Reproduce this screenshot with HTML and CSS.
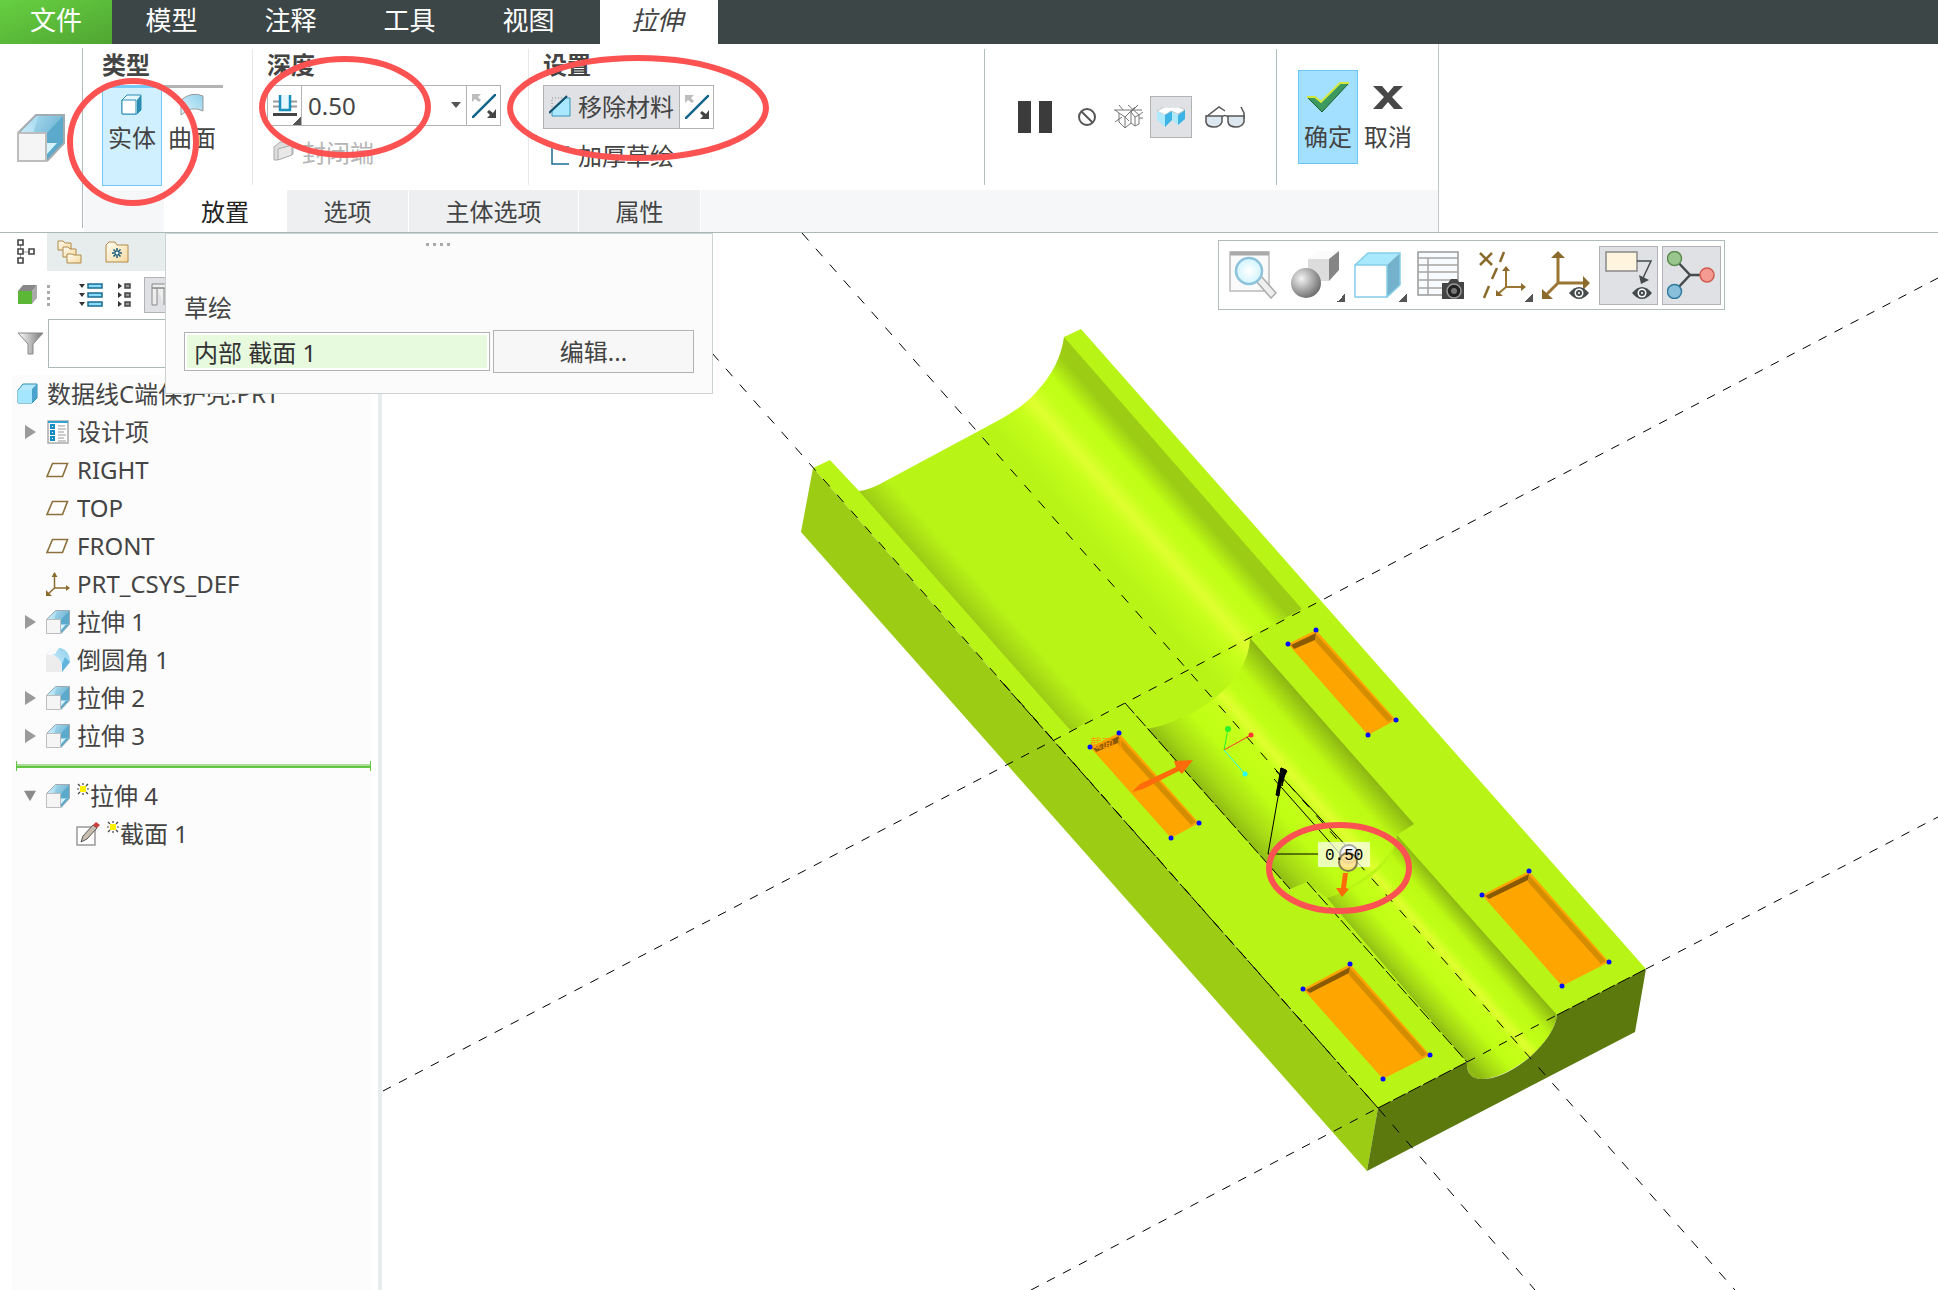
FILE: index.html
```html
<!DOCTYPE html>
<html lang="zh-CN">
<head>
<meta charset="utf-8">
<title>拉伸</title>
<link rel="stylesheet" href="styles.css">
</head>
<body>
<svg class="defs" aria-hidden="true">
  <defs>
    <linearGradient id="glassTop" x1="0" y1="1" x2="1" y2="0"><stop offset="0" stop-color="#e2f7ff"/><stop offset="1" stop-color="#8ecfea"/></linearGradient>
    <linearGradient id="glassSide" x1="0" y1="0" x2="1" y2="1"><stop offset="0" stop-color="#a5d8ee"/><stop offset="1" stop-color="#4f9fc2"/></linearGradient>
    <linearGradient id="steel" x1="0" y1="0" x2="1" y2="0"><stop offset="0" stop-color="#fff"/><stop offset="1" stop-color="#777"/></linearGradient>
    <radialGradient id="ball" cx=".35" cy=".35" r=".7"><stop offset="0" stop-color="#f4f4f4"/><stop offset="1" stop-color="#6c6c6c"/></radialGradient>
    <radialGradient id="lens" cx=".5" cy=".5" r=".6"><stop offset="0" stop-color="#fff"/><stop offset="1" stop-color="#c9f2ff"/></radialGradient>
    <linearGradient id="folder" x1="0" y1="0" x2="1" y2="1"><stop offset="0" stop-color="#fffdf2"/><stop offset="1" stop-color="#f6d9a0"/></linearGradient>
  </defs>
  <symbol id="extrude" viewBox="0 0 24 24">
    <path d="M.5 9.500 9.500.5H23.500V14.500L15 23.500Z" fill="url(#glassTop)"/>
    <path d="M11 .5H23.500V14.500L15 23.500V9.500H8Z" fill="url(#glassSide)"/>
    <path d="M15 9.500 23.500.5V14.500H15Z" fill="#5ba9cb"/>
    <path d="M15 14.500H23.500L15 23.500Z" fill="#d6f3ff"/>
    <path d="M15 20 20 14.500H23.500L15 23.500Z" fill="#5ba9cb"/>
    <path d="M.5 9.500 9.500.5H23.500V14.500L15 23.500" fill="none" stroke="#a3abb0"/>
    <path d="M.5 9.500H14.500V23.500H.5Z" fill="#f5f5f5" stroke="#bdbdbd"/>
  </symbol>
  <symbol id="solid" viewBox="0 0 24 24">
    <path d="M2 7 7 2H21V17L17 21H2Z" fill="#e6f8ff" stroke="#2d8db4" stroke-linejoin="round"/>
    <path d="M17 7 21 2V17L17 21Z" fill="#2b8cb4"/><path d="M2 7H16V21H2Z" fill="#fff" stroke="#2d8db4"/>
  </symbol>
  <symbol id="part" viewBox="0 0 24 24">
    <path d="M2 8 7 2H21V16L16 21H2Z" fill="#b5e8fb" stroke="#2d8db4" stroke-linejoin="round"/>
    <path d="M16 7 21 2V16L16 21Z" fill="#4aa3cc"/><path d="M2 8H16V21H2Z" fill="#a4e6fd"/>
  </symbol>
  <symbol id="plane" viewBox="0 0 24 24"><path d="M6.500 5.500H21.500L16.500 18.500H1Z" fill="#fff" stroke="#8c6f3c" stroke-width="1.600"/></symbol>
  <symbol id="csys" viewBox="0 0 24 24"><path d="M8.500 1V16H23M8.500 16 1 23" fill="none" stroke="#8a6c2f" stroke-width="1.500"/><path d="M5.500 5 8.500 0 11.500 5ZM20 13 24 16 20 19ZM0 18V24H6Z" fill="#8a6c2f"/></symbol>
  <symbol id="flip" viewBox="0 0 24 24"><path d="M0 24 24 0" stroke="#12658a" stroke-width="2.500"/><path d="M0 0H9L6 3 9 6 7 8 3 5 0 8Z" fill="#bdbdbd"/><path d="M24 24H15L18 21 15 18 17 16 21 19 24 15Z" fill="#444"/></symbol>
  <symbol id="spark" viewBox="0 0 12 12"><path d="M3 3H9V9H3Z" fill="#ffef00"/><path d="M6 0V2M6 10V12M0 6H2M10 6H12M1 1 3 3M11 1 9 3M1 11 3 9M11 11 9 9" stroke="#444" stroke-width="1.200"/></symbol>
  <symbol id="right" viewBox="0 0 12 14"><path d="M1 0 12 7 1 14Z" fill="#9a9a9a"/></symbol>
  <symbol id="down" viewBox="0 0 14 12"><path d="M0 0H14L7 12Z" fill="#8a8a8a"/></symbol>
  <symbol id="eye" viewBox="0 0 20 12"><path d="M0 6Q10-6 20 6 10 18 0 6Z" fill="#454b4d"/><circle cx="10" cy="6" r="4.500" fill="#fff"/><circle cx="10" cy="6" r="3" fill="#454b4d"/><circle cx="10" cy="6" r="1" fill="#fff"/></symbol>
</svg>

<nav class="menu">
  <button class="menu-tab file">文件</button>
  <button class="menu-tab">模型</button>
  <button class="menu-tab">注释</button>
  <button class="menu-tab">工具</button>
  <button class="menu-tab">视图</button>
  <button class="menu-tab active">拉伸</button>
</nav>

<header class="ribbon">
  <div class="brand"><svg width="48" height="48"><use href="#extrude"/></svg></div>
  <div class="ribbon-body">
    <div class="groups">
      <section class="group type">
        <h2>类型</h2>
        <div class="types">
          <button class="big on"><svg width="24" height="24"><use href="#solid"/></svg>实体</button>
          <button class="big"><svg width="24" height="24" viewBox="0 0 24 24"><path d="M1 22V7Q12-2 23 3V18Q11 12 1 22Z" fill="url(#glassTop)" stroke="#999"/></svg>曲面</button>
        </div>
      </section>
      <section class="group depth">
        <h2>深度</h2>
        <div class="combo">
          <button class="cell corner" aria-label="深度选项"><svg width="24" height="24" viewBox="0 0 24 24"><path d="M0 7.500H24M0 12.500H24" stroke="#999" stroke-width="2"/><path d="M0 20.500H24" stroke="#444" stroke-width="3"/><path d="M7 1V16H17V1" fill="#e4f7ff" stroke="#1790bd" stroke-width="2.500"/></svg></button>
          <input aria-label="深度" value="0.50">
          <button class="drop" aria-label="展开"><svg width="12" height="7" viewBox="0 0 12 7"><path d="M1 0H11L6 6Z" fill="#555"/></svg></button>
          <button class="cell" aria-label="反向"><svg width="24" height="24"><use href="#flip"/></svg></button>
        </div>
        <button class="line" disabled><svg width="24" height="24" viewBox="0 0 24 24"><path d="M2 6 8 1H21V13L5 19H2Z" fill="#ddd" stroke="#aaa"/><path d="M6 8 20 4V14L6 19Z" fill="#e8e8e8" stroke="#aaa"/></svg>封闭端</button>
      </section>
      <section class="group settings">
        <h2>设置</h2>
        <div class="remove">
          <button class="toggle"><svg width="24" height="24" viewBox="0 0 24 24"><path d="M3 12V3H13" fill="none" stroke="#888" stroke-dasharray="1 2"/><path d="M3 16 17 3H21V21H3Z" fill="#a9e8ff" stroke="#3a93b9"/><path d="M0 18 18 1" stroke="#12506e" stroke-width="2"/></svg>移除材料</button>
          <button class="cell" aria-label="反向"><svg width="24" height="24"><use href="#flip"/></svg></button>
        </div>
        <button class="line"><svg width="24" height="24" viewBox="0 0 24 24"><path d="M21 3H4V20H21" fill="none" stroke="#1c6d94" stroke-width="1.500"/></svg>加厚草绘</button>
      </section>
      <section class="group preview">
        <button class="ic pause" aria-label="暂停"><svg width="34" height="32" viewBox="0 0 34 32"><path d="M0 0H13V32H0ZM21 0H34V32H21Z" fill="#3b3b3b"/></svg></button>
        <button class="ic none" aria-label="无预览"><svg width="20" height="20" viewBox="0 0 20 20"><circle cx="10" cy="10" r="8" fill="none" stroke="#555" stroke-width="2"/><path d="M4.500 4.500 15.500 15.500" stroke="#555" stroke-width="2"/></svg></button>
        <button class="ic wire" aria-label="分离"><svg width="30" height="26" viewBox="0 0 30 26"><path d="M0 6H28M1 6 5 9V18L11 24 17 19V8M5 9 11 13V24M11 13 21 3M5 1 9 6M14 1 25 11M24 1 17 8 21 13V22L17 19M21 22 25 20V11L29 8M21 13 25 11M1 18 8 13M11 13 15 17M25 14H29" fill="none" stroke="#777"/></svg></button>
        <button class="ic attached" aria-label="连接"><svg width="28" height="20" viewBox="0 0 28 20"><path d="M0 4 7 0H22L28 3 21 7 14 4 8 8Z" fill="#fff" stroke="#999" stroke-width=".5"/><path d="M0 4 8 8V20L0 13ZM14 4 21 8V18L14 12Z" fill="#aee9fd"/><path d="M8 8 15 4V13L8 20ZM21 8 28 3V12L21 18Z" fill="#3db4e6"/></svg></button>
        <button class="ic" aria-label="校验"><svg width="40" height="24" viewBox="0 0 40 24"><path d="M1 12 14 2 20 6M36 2 39 8V14" fill="none" stroke="#555" stroke-width="1.500"/><path d="M1 11H17V17Q15 22 9 22 2 22 1 17ZM23 11H39V17Q37 22 31 22 24 22 23 17Z" fill="#dde7f0" stroke="#555" stroke-width="1.500"/><path d="M17 12Q20 9 23 12" fill="none" stroke="#555" stroke-width="1.500"/></svg></button>
      </section>
      <section class="group confirm">
        <button class="verdict ok"><svg width="44" height="32" viewBox="0 0 44 32"><path d="M1 16H9L15 21 34 2H43L16 31Z" fill="#3c9a60" stroke="#1d5f35"/><path d="M1 16H9L15 21 34 2H43" fill="none" stroke="#d3e83a" stroke-width="2"/></svg>确定</button>
        <button class="verdict"><svg width="30" height="32" viewBox="0 0 30 32"><path d="M0 5H9L15 12 21 5H30L19 16 30 28H21L15 21 9 28H0L11 16Z" fill="#484848"/></svg>取消</button>
      </section>
    </div>
    <div class="subtabs">
      <button class="sub current">放置</button>
      <button class="sub">选项</button>
      <button class="sub wide">主体选项</button>
      <button class="sub">属性</button>
    </div>
  </div>
  <div class="placement">
    <span class="grip"><i></i><i></i><i></i><i></i></span>
    <label for="sketch">草绘</label>
    <div class="pick"><input id="sketch" value="内部 截面 1"><button>编辑...</button></div>
  </div>
  <svg class="marks" width="780" height="220" aria-hidden="true">
    <g fill="none" stroke="#fd5252" stroke-width="6"><ellipse cx="133" cy="142" rx="63" ry="61"/><ellipse cx="345" cy="107" rx="83" ry="48"/><ellipse cx="638" cy="108" rx="128" ry="50"/></g>
  </svg>
</header>

<main class="work">
  <aside class="side">
    <div class="side-tabs">
      <button class="side-tab" aria-label="模型树"><svg width="18" height="26" viewBox="0 0 18 26"><path d="M3.500 6V19M6 13H12" stroke="#999"/><path d="M1 1H6V6H1ZM1 10H6V15H1ZM1 19H6V24H1ZM12 10H17V15H12Z" fill="#fff" stroke="#444" stroke-width="1.600"/></svg></button>
      <button class="side-alt" aria-label="文件夹浏览器"><svg width="26" height="26" viewBox="0 0 26 26"><g fill="url(#folder)" stroke="#b08a4a"><path d="M1 2H6L8 4H14V11H1Z"/><path d="M6 8H11L13 10H19V18H6Z"/><path d="M10 15H15L17 16H24V24H10Z"/></g></svg></button>
      <button class="side-alt" aria-label="收藏夹"><svg width="24" height="24" viewBox="0 0 24 24"><path d="M1 5 4 2H10L12 5H23V22H1Z" fill="url(#folder)" stroke="#b08a4a"/><path d="M12 8V18M7 13H17M8.500 9.500 15.500 16.500M15.500 9.500 8.500 16.500" stroke="#165a7c" stroke-width="1.500"/><circle cx="12" cy="13" r="1.500" fill="#fff"/></svg></button>
    </div>
    <div class="side-tools">
      <svg width="20" height="20" viewBox="0 0 20 20"><path d="M0 6 5 0H19L14 6Z" fill="#888"/><path d="M14 6 19 0V13L14 19Z" fill="#aaa"/><path d="M0 6H14V19H0Z" fill="#5cb737"/></svg>
      <span class="dots"><i></i><i></i><i></i><i></i></span>
      <button aria-label="展开全部"><svg width="24" height="26" viewBox="0 0 24 26"><path d="M0 2H6L3 6ZM0 11H6L3 15ZM0 20H6L3 24Z" fill="#333"/><path d="M9 2H23V6H9ZM9 11H23V15H9ZM9 20H23V24H9Z" fill="#8adcfb" stroke="#1a6b8e" stroke-width="1.500"/></svg></button>
      <button aria-label="收起全部"><svg width="14" height="26" viewBox="0 0 14 26"><path d="M0 1 4 4 0 7ZM0 10 4 13 0 16ZM0 19 4 22 0 25Z" fill="#333"/><path d="M7 2H12V6H7ZM7 11H12V15H7ZM7 20H12V24H7Z" fill="#999" stroke="#444" stroke-width="1.500"/></svg></button>
      <button class="columns" aria-label="树列"><svg width="24" height="24" viewBox="0 0 24 24"><path d="M1 1H20V5H1ZM1 5H6V22H1ZM6 5H13V22" fill="#eee" stroke="#888"/></svg></button>
    </div>
    <div class="filter">
      <svg width="26" height="24" viewBox="0 0 26 24"><path d="M0 1H25L15 12V22H10V12Z" fill="url(#steel)" stroke="#888"/></svg>
      <input aria-label="过滤">
    </div>
    <ul class="tree">
      <li class="row root"><svg width="24" height="24"><use href="#part"/></svg>数据线C端保护壳.PRT</li>
      <li class="row"><svg class="tw" width="12" height="14"><use href="#right"/></svg><svg width="24" height="24" viewBox="0 0 24 24"><path d="M2 1H22V23H2Z" fill="#fff" stroke="#aaa" stroke-width="1.500"/><path d="M2 2H22" stroke="#34a1cf" stroke-width="2"/><path d="M12 6H19M12 9H20M12 12H18M12 15H20M12 18H18M12 21H20" stroke="#999"/><path d="M5 5H8V8H5ZM5 11H8V14H5ZM5 17H8V20H5Z" fill="#fff" stroke="#168cc0" stroke-width="2"/></svg>设计项</li>
      <li class="row leaf"><svg width="24" height="24"><use href="#plane"/></svg>RIGHT</li>
      <li class="row leaf"><svg width="24" height="24"><use href="#plane"/></svg>TOP</li>
      <li class="row leaf"><svg width="24" height="24"><use href="#plane"/></svg>FRONT</li>
      <li class="row leaf"><svg width="24" height="24"><use href="#csys"/></svg>PRT_CSYS_DEF</li>
      <li class="row"><svg class="tw" width="12" height="14"><use href="#right"/></svg><svg width="24" height="24"><use href="#extrude"/></svg>拉伸 1</li>
      <li class="row leaf"><svg width="24" height="24" viewBox="0 0 24 24"><path d="M5 0H15Q24 3 24 14L16 24Q17 10 5 6L0 7Z" fill="url(#glassTop)"/><path d="M19 9 24 14 16 24V16Z" fill="#62b5dc"/><path d="M5 0H13L9 6 0 7Z" fill="#fafafa"/><path d="M0 7H5Q16 9 16 24H0Z" fill="#ececec"/></svg>倒圆角 1</li>
      <li class="row"><svg class="tw" width="12" height="14"><use href="#right"/></svg><svg width="24" height="24"><use href="#extrude"/></svg>拉伸 2</li>
      <li class="row"><svg class="tw" width="12" height="14"><use href="#right"/></svg><svg width="24" height="24"><use href="#extrude"/></svg>拉伸 3</li>
      <li class="insert"><span></span></li>
      <li class="row"><svg class="tw" width="12" height="12"><use href="#down"/></svg><svg width="24" height="24"><use href="#extrude"/></svg><svg class="new" width="12" height="12"><use href="#spark"/></svg>拉伸 4</li>
      <li class="row child"><svg width="24" height="24" viewBox="0 0 24 24"><path d="M1 5H19V23H1Z" fill="#fff" stroke="#999" stroke-width="1.500"/><path d="M5 20 7 14 17 3 21 6 11 17Z" fill="#c9bdb2" stroke="#555"/><path d="M17 3 20 0 24 3 21 6Z" fill="#c9403a"/></svg><svg class="new" width="12" height="12"><use href="#spark"/></svg>截面 1</li>
    </ul>
  </aside>

  <section class="canvas">
    <svg class="scene" viewBox="382 233 1556 1057" preserveAspectRatio="xMinYMin slice" role="img" aria-label="模型">
      <defs>
        <linearGradient id="wide" gradientUnits="userSpaceOnUse" x1="859" y1="491" x2="1051" y2="322">
          <stop offset="0" stop-color="#9ccb15"/><stop offset=".05" stop-color="#a8dd16"/><stop offset=".12" stop-color="#b8f516"/><stop offset=".56" stop-color="#b8f516"/><stop offset=".68" stop-color="#c5ff1a"/><stop offset=".74" stop-color="#e0ff30"/><stop offset=".8" stop-color="#c4ff1a"/><stop offset=".86" stop-color="#bfff14"/><stop offset=".94" stop-color="#9ccd14"/><stop offset="1" stop-color="#9ccd14"/>
        </linearGradient>
        <linearGradient id="g1" gradientUnits="userSpaceOnUse" x1="1147" y1="729" x2="1250" y2="638">
          <stop offset="0" stop-color="#8fba13"/><stop offset=".12" stop-color="#a6da15"/><stop offset=".32" stop-color="#bfff14"/><stop offset=".5" stop-color="#c6ff1a"/><stop offset=".57" stop-color="#e0ff30"/><stop offset=".66" stop-color="#c2ff17"/><stop offset=".8" stop-color="#bcfa14"/><stop offset="1" stop-color="#8cb512"/>
        </linearGradient>
        <linearGradient id="g2" gradientUnits="userSpaceOnUse" x1="1467" y1="1062" x2="1541" y2="997">
          <stop offset="0" stop-color="#8fba13"/><stop offset=".12" stop-color="#a6da15"/><stop offset=".3" stop-color="#bfff14"/><stop offset=".48" stop-color="#c6ff1a"/><stop offset=".55" stop-color="#e0ff30"/><stop offset=".64" stop-color="#c2ff17"/><stop offset=".8" stop-color="#bcfa14"/><stop offset="1" stop-color="#8cb512"/>
        </linearGradient>
        <linearGradient id="pearl" x1="0" y1="0" x2="0" y2="1"><stop offset="0" stop-color="#fff"/><stop offset="1" stop-color="#ddd"/></linearGradient>
      </defs>
      <g class="solid">
        <path fill="#b8f516" d="M813 468 830 460 859 491 1010 540 1100 420 1064 337 1081 329 1646 969 1378 1108Z"/>
        <path fill="url(#wide)" d="M859 491Q868 490 880 484L1001 419Q1026 405 1038 390 1060 366 1064 337L1302 609 1071 731Z"/>
        <path fill="#9ccc14" d="M813 468 1378 1108 1367 1171 801 532Z"/>
        <path fill="url(#g1)" d="M1250 638 1414 824 1397 835Q1390 870 1327 898L1307 882 1290 889 1147 729Q1175 724 1202 706 1248 676 1250 638Z"/>
        <path fill="url(#wide)" d="M1150 684 1250 637Q1249 676 1204 706 1195 712 1185 717Z"/>
        <path fill="url(#g2)" d="M1397 835 1557 1015Q1555 1034 1530 1057 1500 1080 1480 1079 1466 1078 1467 1062L1327 898Q1392 876 1397 835Z"/>
        <path fill="#5b790d" d="M1378 1108 1467 1062Q1466 1079 1482 1079 1503 1079 1530 1057 1555 1034 1557 1015L1646 969 1635 1032 1367 1171Z"/>
      </g>
      <g class="pockets">
        <path fill="#ffa500" d="M1288 644 1316 630 1396 720 1368 735ZM1090 747 1119 733 1199 823 1171 838ZM1482 895 1529 871 1609 962 1562 986ZM1303 989 1350 964 1430 1055 1383 1079Z"/>
        <path fill="#d48c00" d="M1316 634 1393 719 1388 722 1315 641ZM1119 737 1196 822 1191 825 1118 744ZM1529 875 1606 961 1601 964 1528 882ZM1350 968 1427 1054 1422 1057 1349 975Z"/>
        <path fill="#8a5a00" d="M1291 645 1316 633 1315 640 1294 649ZM1093 748 1119 736 1118 743 1096 752ZM1485 896 1529 874 1528 880 1489 899ZM1306 990 1350 967 1349 973 1310 993Z"/>
      </g>
      <text x="1090" y="748" class="tag">截面 1</text>
      <g class="datum">
        <path stroke-dasharray="9 9" d="M383 1091 1938 278M1031 1290 1378 1108M1467 1062 1557 1015M1646 969 1938 817"/>
        <path stroke-dasharray="10 11" d="M712 353 1378 1108 1535 1290M802 233 1735 1290"/>
        <path stroke-dasharray="14 3" d="M1125 703 1290 889M1307 882 1467 1062M1378 1108 1467 1062M1557 1015 1646 969M1000 680 1378 1108"/>
        <path d="M1268 854H1318M1268 854 1281 780M1276 771 1350 850M1274 779 1342 856"/>
        <path fill="#000" d="M1281 768 1287 771 1281 782 1279 796 1276 795ZM1281 768 1286 770 1282 786Z"/>
      </g>
      <g fill="#0010ff"><circle cx="1288" cy="644" r="2.500"/><circle cx="1316" cy="630" r="2.500"/><circle cx="1396" cy="720" r="2.500"/><circle cx="1368" cy="735" r="2.500"/><circle cx="1090" cy="747" r="2.500"/><circle cx="1119" cy="733" r="2.500"/><circle cx="1199" cy="823" r="2.500"/><circle cx="1171" cy="838" r="2.500"/><circle cx="1482" cy="895" r="2.500"/><circle cx="1529" cy="871" r="2.500"/><circle cx="1609" cy="962" r="2.500"/><circle cx="1562" cy="986" r="2.500"/><circle cx="1303" cy="989" r="2.500"/><circle cx="1350" cy="964" r="2.500"/><circle cx="1430" cy="1055" r="2.500"/><circle cx="1383" cy="1079" r="2.500"/></g>
      <path fill="#ff6a0a" d="M1132 792 1140 784 1176 767 1174 761 1193 760 1182 774 1179 771 1143 789Z"/>
      <g fill="none"><path stroke="#2bf32b" d="M1224 750 1228 729"/><path stroke="#f33" d="M1224 750 1251 735"/><path stroke="#2ff" d="M1224 750 1245 774"/></g>
      <circle cx="1228" cy="729" r="3" fill="#2bf32b"/><circle cx="1251" cy="735" r="2.500" fill="#f33"/><circle cx="1245" cy="774" r="2.500" fill="#2ff"/>
      <path fill="#fff" fill-opacity=".7" d="M1318 842H1370V867H1318Z"/>
      <circle cx="1349" cy="854" r="9" fill="url(#pearl)" stroke="#aaa" stroke-width="2"/>
      <circle cx="1348" cy="862" r="9" fill="#ffe08a" fill-opacity=".8" stroke="#857750" stroke-width="2"/>
      <path fill="#ff6a0a" d="M1343 873H1348L1346 888 1349 889 1342 897 1336 888 1341 888Z"/>
      <text x="1325" y="860" class="dim">0.50</text>
      <ellipse cx="1339" cy="868" rx="70" ry="43" fill="none" stroke="#fd5252" stroke-width="6"/>
    </svg>

    <div class="viewbar">
      <button aria-label="重新调整"><svg width="48" height="48" viewBox="0 0 48 48"><path d="M1 1H40V40H1Z" fill="#fafafa" stroke="#bbb" stroke-width="1.500"/><path d="M1 2.500H40" stroke="#aaa" stroke-width="4"/><path d="M27 30 32 25 47 42 42 47Z" fill="#eee" stroke="#aaa" stroke-width="1.500"/><circle cx="20" cy="20" r="13" fill="url(#lens)" stroke="#8cc3da" stroke-width="2.500"/></svg></button>
      <button class="more" aria-label="着色"><svg width="48" height="48" viewBox="0 0 48 48"><path d="M17 8H38V30H17Z" fill="#dcdcdc"/><path d="M17 8 27 0H48L38 8Z" fill="#fbfbfb"/><path d="M38 8 48 0V19L38 30Z" fill="#858585"/><circle cx="15" cy="32" r="15" fill="url(#ball)"/></svg></button>
      <button class="more" aria-label="显示样式"><svg width="48" height="48" viewBox="0 0 48 48"><path d="M1 14 14 2H46L33 14Z" fill="#a8e9fd"/><path d="M33 14 46 2V34L33 46Z" fill="#74b2cc"/><path d="M1 14H33V46H1Z" fill="#fff" stroke="#85cde9" stroke-width="1.500"/><path d="M1 14 14 2H46V34L33 46" fill="none" stroke="#85cde9" stroke-width="1.500"/></svg></button>
      <button aria-label="视图管理器"><svg width="48" height="48" viewBox="0 0 48 48"><path d="M1 1H41V44H1Z" fill="#f8fbfd" stroke="#999" stroke-width="1.500"/><path d="M1 7H41M1 14H41M1 21H41M1 29H41M1 37H41M11 7V44" stroke="#a5a5a5" stroke-width="1.500"/><path d="M25 32H31L34 28H40L42 31H47V48H25Z" fill="#444"/><circle cx="37" cy="40" r="7" fill="#222" stroke="#999" stroke-width="1.500"/><circle cx="37" cy="40" r="3" fill="#777"/></svg></button>
      <button class="more" aria-label="基准显示"><svg width="48" height="48" viewBox="0 0 48 48"><path d="M1 2 13 14M13 2 1 14M25 1 21 11M18 17 13 28M10 35 5 47" stroke="#8c6a2c" stroke-width="2.500"/><path d="M27 19V36H44M27 36 19 43" fill="none" stroke="#9a7632" stroke-width="2"/><path d="M23 20 27 15 31 20ZM42 32 47 36 42 40ZM17 39V45H24Z" fill="#8c6a2c"/></svg></button>
      <button aria-label="坐标系显示"><svg width="48" height="48" viewBox="0 0 48 48"><path d="M16 5V32H44M16 32 5 43" fill="none" stroke="#9a7632" stroke-width="3"/><path d="M9 7 16 0 23 7ZM41 25 48 32 41 39ZM0 38V48H11Z" fill="#8c6a2c"/><use href="#eye" x="26" y="36" width="22" height="12"/></svg></button>
      <button class="pressed" aria-label="注释显示"><svg width="48" height="48" viewBox="0 0 48 48"><path d="M1 1H32V20H1Z" fill="#fff5df" stroke="#888" stroke-width="1.500"/><path d="M32 10H46L38 27" fill="none" stroke="#454b4d" stroke-width="1.500"/><path d="M34 24 44 29 36 33Z" fill="#454b4d"/><use href="#eye" x="26" y="36" width="22" height="12"/></svg></button>
      <button class="pressed" aria-label="旋转中心"><svg width="48" height="48" viewBox="0 0 48 48"><path d="M7 7 23 24 7 41M23 24H40" fill="none" stroke="#454b4d" stroke-width="2.500"/><circle cx="7.500" cy="7.500" r="7" fill="#98c68c" stroke="#5d8c50" stroke-width="1.500"/><circle cx="7.500" cy="40.500" r="7" fill="#8abfdb" stroke="#2f7ba0" stroke-width="1.500"/><circle cx="40" cy="24" r="7" fill="#f59a90" stroke="#cf5b50" stroke-width="1.500"/></svg></button>
    </div>
  </section>
</main>
</body>
</html>
```
FILE: styles.css
```css
* { box-sizing: border-box; }
body {
  margin: 0;
  min-height: 100vh;
  display: flex;
  flex-direction: column;
  background: #fff;
  color: #444;
  font: 24px/32px "Noto Sans", "Noto Sans CJK SC", sans-serif;
}
button, input { font: inherit; color: inherit; margin: 0; padding: 0; border: 0; background: none; border-radius: 0; }
button { cursor: pointer; white-space: nowrap; }
svg { display: block; flex: none; }
h2 { margin: 0; font-size: 24px; line-height: 32px; font-weight: 700; }
.defs { position: absolute; width: 0; height: 0; }

.menu { display: flex; height: 44px; background: #3d4647; }
.menu-tab { width: 119px; padding-bottom: 4px; color: #fff; font-size: 26px; }
.menu-tab.file { width: 112px; background: linear-gradient(160deg, #66d041, #50a532); }
.menu-tab.active { width: 118px; margin-left: 12px; padding-right: 4px; background: #fff; color: #444; font-style: italic; }

.ribbon { position: relative; display: flex; border-bottom: 1px solid #a9b9b8; }
.brand { width: 83px; margin: 4px 0; border-right: 1px solid #b0bcbc; display: flex; align-items: center; padding-left: 17px; }
.ribbon-body { width: 1356px; border: solid #c0c8c8; border-width: 0 1px 0 0; }
.groups { display: flex; height: 146px; align-items: center; }
.group { height: 136px; border-right: 1px solid #e6e8e9; }
.type { width: 170px; padding-left: 19px; }
.depth { width: 276px; padding-left: 14px; }
.settings { width: 456px; padding-left: 14px; border-color: #b5bebe; }
.preview { width: 292px; display: flex; align-items: center; padding-left: 33px; border-color: #b5bebe; }
.confirm { display: flex; gap: 4px; padding: 21px 0 0 21px; border: 0; }

.types { display: flex; width: 121px; margin-top: 4px; border-top: 3px solid #b3b3b3; }
.big { height: 98px; width: 60px; padding-top: 5px; display: flex; flex-direction: column; align-items: center; gap: 5px; border: 1px solid transparent; border-top: 0; }
.big.on { height: 101px; margin-top: -3px; background: #d1f0ff; border-color: #74c9f7; border-top: 3px solid #74c9f7; }
.combo { display: flex; width: 234px; height: 41px; margin-top: 4px; border: 1px solid #b3b3b3; }
.combo input { width: 144px; padding-left: 6px; }
.cell { width: 34px; display: flex; align-items: center; justify-content: center; background: #fff; border-left: 1px solid #b3b3b3; }
.corner { position: relative; border-left: 0; border-right: 1px solid #b3b3b3; }
.drop { width: 20px; display: flex; align-items: center; justify-content: center; }
.line { display: flex; align-items: center; gap: 6px; margin-top: 11px; padding-left: 5px; }
.line:disabled { color: #b5b5b5; }
.remove { display: flex; width: 171px; height: 44px; margin-top: 4px; border: 1px solid #b3b3b3; }
.toggle { width: 136px; display: flex; align-items: center; gap: 5px; padding-left: 5px; background: #dfe1e4; }
.ic { display: flex; align-items: center; justify-content: center; height: 42px; }
.pause { margin-right: 25px; }
.none { margin-right: 17px; }
.wire { margin-right: 6px; }
.attached { width: 42px; background: #dfe1e4; border: 1px solid #b3b3b3; margin-right: 13px; }
.verdict { height: 94px; width: 60px; display: flex; flex-direction: column; align-items: center; justify-content: center; gap: 8px; border: 1px solid transparent; }
.verdict + .verdict { width: 52px; }
.ok { background: #a3dfff; border-color: #6cc6f5; }

.subtabs { display: flex; height: 42px; margin-left: 1px; padding-left: 80px; background: #f6f7f9; }
.sub { width: 122px; padding-top: 2px; background: #edeff1; border-right: 1px solid #fff; }
.sub.wide { width: 170px; }
.current { width: 123px; background: #fff; color: #222; }

.placement { position: absolute; z-index: 2; top: 189px; left: 165px; width: 548px; height: 161px; padding: 58px 18px 0; background: #fbfbfb; border: 1px solid #ccd2d2; }
.placement label { display: block; }
.grip { position: absolute; top: 9px; left: 260px; display: flex; gap: 4px; }
.grip i, .dots i { width: 3px; height: 3px; background: #aaa; }
.pick { display: flex; align-items: center; gap: 3px; margin-top: 6px; }
.pick input { width: 306px; height: 39px; padding-left: 9px; background: #e8fadd; color: #333; border: 1px solid #b0b3b3; box-shadow: inset 0 0 0 2px #fff; }
.pick button { width: 201px; height: 43px; background: #f7f7f7; border: 1px solid #b3b3b3; }
.marks { position: absolute; z-index: 3; top: -44px; left: 0; pointer-events: none; }

.work { flex: 1; display: flex; }
.side { width: 382px; flex: none; border-right: 4px solid #e7edec; }
.side-tabs { display: flex; height: 38px; background: #e7edec; }
.side-tab { width: 47px; background: #fff; padding-left: 17px; }
.side-alt { width: 48px; padding-left: 10px; }
.side-tools { display: flex; align-items: center; height: 36px; margin: 6px 0; padding-left: 18px; }
.dots { display: grid; gap: 3px; margin: 0 29px 0 9px; }
.side-tools button { margin-right: 15px; }
.side-tools .columns { width: 36px; height: 36px; margin: 0 0 0 -3px; padding-left: 6px; background: #dfe1e4; border: 1px solid #b3b3b3; }
.filter { display: flex; align-items: center; height: 49px; padding-left: 18px; gap: 4px; margin-bottom: 7px; }
.filter input { flex: 1; height: 49px; background: #fff; border: 1px solid #a9b9b8; }
.tree { list-style: none; margin: 0 7px 0 12px; padding: 0; background: #fcfcfc; min-height: 915px; }
.row { display: flex; align-items: center; height: 38px; padding-left: 12px; gap: 7px; white-space: nowrap; }
.root { padding-left: 4px; }
.tw { margin-right: 3px; }
.leaf { padding-left: 34px; }
.child { padding-left: 64px; }
.new { align-self: flex-start; margin: 6px -6px 0 0; }
.insert { height: 22px; padding: 6px 0 6px 4px; }
.insert span { display: block; height: 10px; border: solid #62c544; border-width: 0 1px; background: linear-gradient(transparent 3px, #a9dd98 3px, #a9dd98 5px, #62c544 5px, #62c544 7px, transparent 7px); }

.canvas { position: relative; flex: 1; min-width: 0; overflow: hidden; }
.scene { width: 100%; height: 100%; }
.datum { fill: none; stroke: #000; stroke-width: 1; }
.dim { font: 16px "Liberation Mono", monospace; fill: #000; }
.tag { font: 12px "Noto Sans CJK SC", sans-serif; fill: #ff9a00; }
.viewbar { position: absolute; top: 7px; right: 213px; width: 507px; height: 70px; padding: 0 3px 0 4px; display: flex; align-items: center; justify-content: space-between; background: #fff; border: 1px solid #b0bcbc; }
.viewbar button { position: relative; width: 59px; height: 59px; display: flex; align-items: center; justify-content: center; }
.viewbar .pressed { background: #dfe1e4; border: 1px solid #b3b3b3; }
.corner::after, .more::after { content: ""; position: absolute; right: 0; bottom: 0; width: 8px; height: 8px; background: linear-gradient(135deg, transparent 50%, #555 50%); }
.more::after { bottom: 3px; }
```
